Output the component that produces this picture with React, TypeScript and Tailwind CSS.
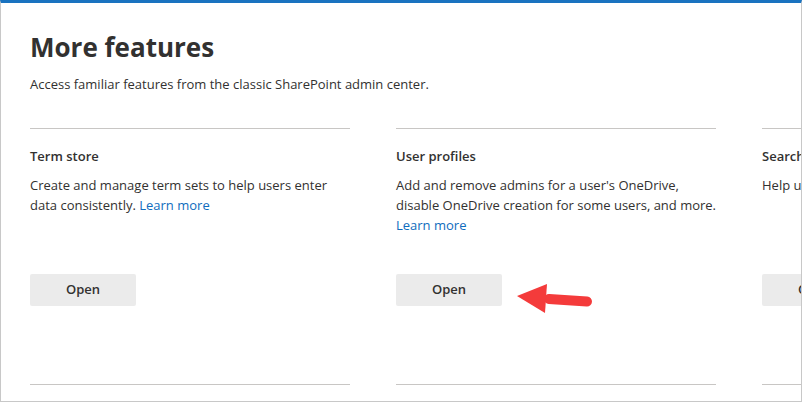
const features = [
  {
    title: 'Term store',
    desc: 'Create and manage term sets to help users enter data consistently.',
  },
  {
    title: 'User profiles',
    desc: "Add and remove admins for a user's OneDrive, disable OneDrive creation for some users, and more.",
  },
  {
    title: 'Search',
    desc: 'Help users find content they need.',
  },
]

function FeatureCard({ title, desc }: { title: string; desc: string }) {
  return (
    <div className="w-[320px] shrink-0 border-t border-[#c8c6c4] flex flex-col h-[256px]">
      <h2 className="mt-[17px] text-[13px] leading-5 font-semibold text-[#323130] whitespace-nowrap">{title}</h2>
      <p className="mt-[9px] w-[324px] text-[13px] leading-5 text-[#323130]">
        {desc} <a className="text-[#0f6cbd] cursor-pointer whitespace-nowrap">Learn more</a>
      </p>
      <div className="mt-auto mb-[78px]">
        <button className="w-[106px] h-[32px] bg-[#ebebeb] rounded-[2px] text-[13px] font-semibold text-[#323130]">
          Open
        </button>
      </div>
    </div>
  )
}

function Arrow() {
  return (
    <svg className="absolute left-0 top-0 pointer-events-none" width="802" height="402">
      <line x1="548" y1="296" x2="586" y2="298.5" stroke="#f43b3b" strokeWidth="10" strokeLinecap="round" />
      <polygon points="516,293 546,281 544,310" fill="#f43b3b" />
    </svg>
  )
}

export default function App() {
  return (
    <div
      className="relative w-[802px] h-[402px] overflow-hidden bg-white border-t-[3px] border-t-[#1a73c0] border-x border-b border-x-[#c8c8c8] border-b-[#c8c8c8]"
      style={{ fontFamily: '"Segoe UI", "Open Sans", "Noto Sans", sans-serif' }}
    >
      <div className="pl-[29px] pt-[26px]">
        <h1 className="text-[26px] leading-9 font-bold text-[#323130]">More features</h1>
        <p className="mt-[9px] text-[13px] leading-5 text-[#323130]">
          Access familiar features from the classic SharePoint admin center.
        </p>
        <div className="mt-[34px] flex gap-[46px]">
          {features.map((f) => (
            <FeatureCard key={f.title} {...f} />
          ))}
        </div>
        <div className="flex gap-[46px]">
          {features.map((f) => (
            <div key={f.title} className="w-[320px] shrink-0 border-t border-[#c8c6c4] h-4" />
          ))}
        </div>
      </div>
      <Arrow />
    </div>
  )
}
